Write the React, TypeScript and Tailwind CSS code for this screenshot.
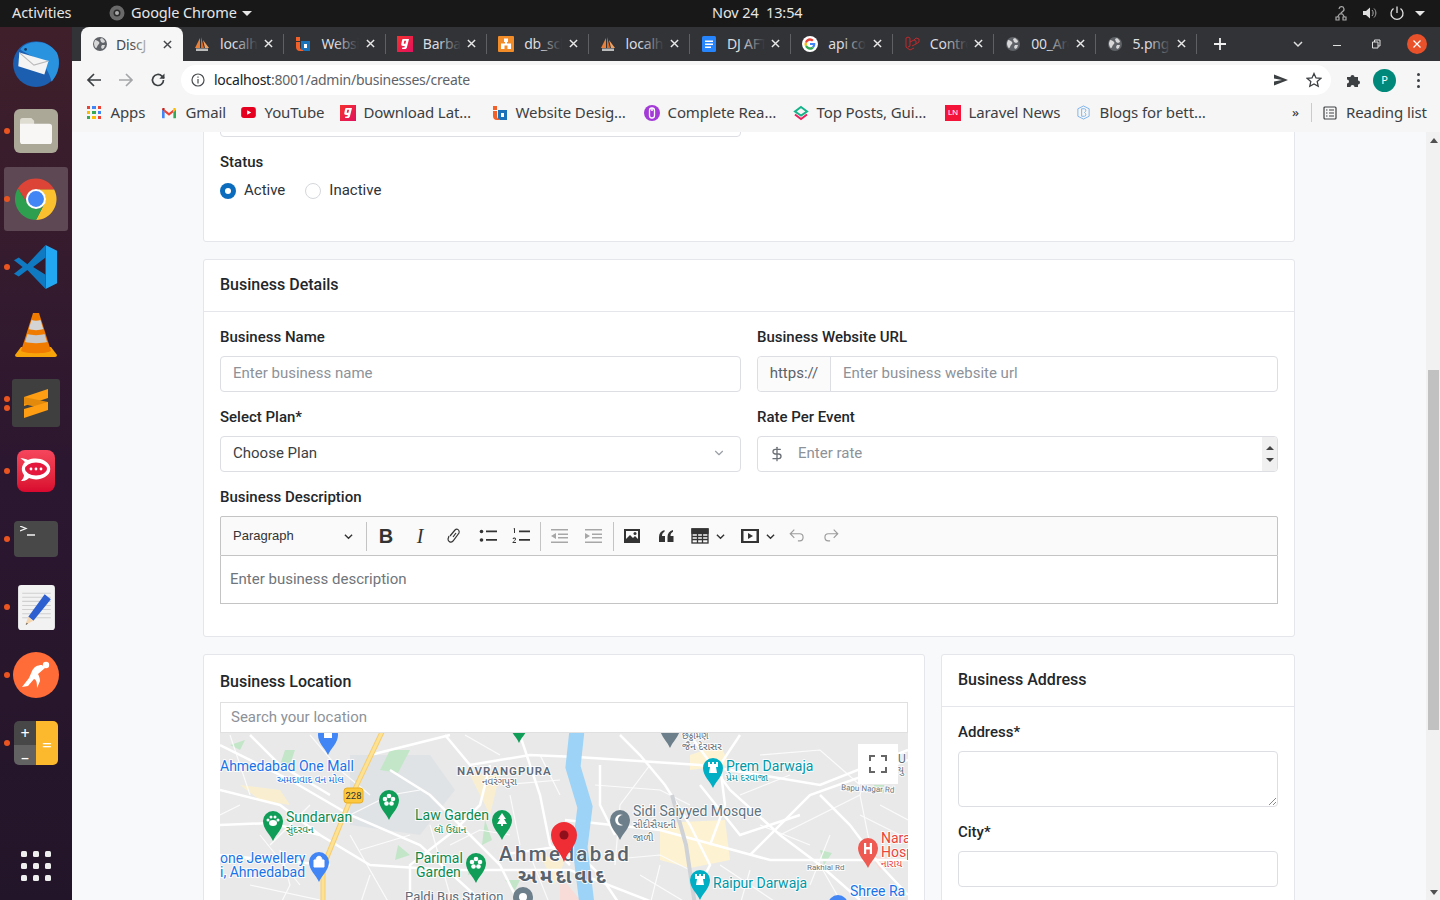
import type { ReactNode } from 'react'
import { ChevronDown, DollarSign } from 'lucide-react'

const ui = 'font-["Noto_Sans","Liberation_Sans",sans-serif]'
const guj = '"Noto Sans Gujarati","Noto Sans","DejaVu Sans",sans-serif'

function Globe({ color = '#5f6368' }: { color?: string }) {
  return (
    <svg viewBox="0 0 16 16" className="h-4 w-4 shrink-0">
      <circle cx="8" cy="8" r="7" fill={color} />
      <path d="M3 4c2 0 3 1 4 2s0 2-1 3-1 3-2 3-2-3-2-5zM10 2c1 1 3 2 3 4l-2 1-2-1-1-3zM10 9l3 0-1 3-2 1-1-2z" fill="#d8d8d8" />
    </svg>
  )
}

function Sails() {
  return (
    <svg viewBox="0 0 16 16" className="h-4 w-4 shrink-0">
      <path d="M1 12 6 2v10z" fill="#e8803a" />
      <path d="M7 12V1l3 11z" fill="#d96a25" />
      <path d="M11 12 9 4l6 8z" fill="#f0a060" />
      <rect x="2" y="12.5" width="12" height="2.5" fill="#bbb" />
    </svg>
  )
}

function SqIcon() {
  return (
    <svg viewBox="0 0 16 16" className="h-4 w-4 shrink-0">
      <path d="M6 5h9v10H6z" fill="#1a73b8" />
      <path d="M9 8h3v4H9z" fill="#fff" />
      <path d="M1 1h4v4H1z" fill="#f2612a" />
      <path d="M1 6h4v5c0 2 1 3 3 3v1H5c-3 0-4-2-4-4z" fill="#f2612a" />
    </svg>
  )
}

function GIcon() {
  return (
    <svg viewBox="0 0 16 16" className="h-4 w-4 shrink-0">
      <defs>
        <linearGradient id="gg" x1="0" y1="0" x2="1" y2="1">
          <stop offset="0" stopColor="#f5312e" />
          <stop offset="1" stopColor="#e0115f" />
        </linearGradient>
      </defs>
      <rect width="16" height="16" fill="url(#gg)" />
      <path d="M6 3h6l-2 8c-.3 1.500-1 2-2.500 2H5l.4-1.500h2l.4-1.500H6c-1.200 0-2-.8-1.700-2l.7-3.500C5.200 3.600 5.500 3 6 3zm1.300 1.800-.6 2.900h1.700l.7-2.900z" fill="#fff" />
    </svg>
  )
}

function DbIcon() {
  return (
    <svg viewBox="0 0 16 16" className="h-4 w-4 shrink-0">
      <rect width="16" height="16" rx="1" fill="#f28c28" />
      <path d="M6 2.500h4v3.500H9v1.500h4V13H9.500V9.500h-3V13H3V7.500h4V6H6z" fill="#fff" />
    </svg>
  )
}

function DocIcon() {
  return (
    <svg viewBox="0 0 16 16" className="h-4 w-4 shrink-0">
      <rect x="1" y="0" width="14" height="16" rx="1.500" fill="#2684fc" />
      <path d="M4 4.500h8v1.500H4zM4 7.500h8V9H4zM4 10.500h6V12H4z" fill="#fff" />
    </svg>
  )
}

function GoogleIcon() {
  return (
    <svg viewBox="0 0 48 48" className="h-4 w-4 shrink-0">
      <circle cx="24" cy="24" r="24" fill="#fff" />
      <path d="M40 24c0-1.200-.1-2.300-.3-3.300H24v6.400h9c-.4 2-1.600 3.800-3.400 5l5.300 4.200C38 33.400 40 29.200 40 24z" fill="#4285f4" />
      <path d="M24 41c4.600 0 8.300-1.500 10.900-4.500l-5.300-4.200c-1.400 1-3.300 1.600-5.600 1.600-4.200 0-7.800-2.900-9.100-6.700l-5.500 4.200C12.100 37.300 17.600 41 24 41z" fill="#34a853" />
      <path d="M14.900 27.200c-.7-2-.7-4.200 0-6.100l-5.500-4.200c-2.400 4.600-2.400 10 0 14.600z" fill="#fbbc05" />
      <path d="M24 14.400c2.400 0 4.600.8 6.200 2.400l4.700-4.700C32.200 9.400 28.400 7 24 7c-6.400 0-11.900 3.700-14.600 9.900l5.500 4.200c1.300-3.800 4.900-6.700 9.100-6.700z" fill="#ea4335" />
    </svg>
  )
}

function LaravelIcon() {
  return (
    <svg viewBox="0 0 16 16" className="h-4 w-4 shrink-0" fill="none" stroke="#c0292d" strokeWidth="1">
      <path d="M2 2v9l4 3 4-2M2 2l2-1 2 1v8l-2 1M6 6l4-2 2 1v3l-4 2M10 4l2-2 3 1v3l-3 2" />
    </svg>
  )
}

const tabs: { title: string; icon: ReactNode }[] = [
  { title: 'localho', icon: <Sails /> },
  { title: 'Websit', icon: <SqIcon /> },
  { title: 'Barbar', icon: <GIcon /> },
  { title: 'db_sch', icon: <DbIcon /> },
  { title: 'localho', icon: <Sails /> },
  { title: 'DJ AFT', icon: <DocIcon /> },
  { title: 'api cod', icon: <GoogleIcon /> },
  { title: 'Contro', icon: <LaravelIcon /> },
  { title: '00_Arc', icon: <Globe /> },
  { title: '5.png', icon: <Globe /> },
]

function TopBar() {
  return (
    <div className={`${ui} relative flex h-[27px] shrink-0 items-center bg-[#181818] pb-px text-[14.500px] tracking-[-0.1px] text-[#e6e6e6]`}>
      <span className="ml-3 w-[97px]">Activities</span>
      <svg viewBox="0 0 16 16" className="h-4 w-4">
        <circle cx="8" cy="8" r="7.500" fill="#6a6a6a" />
        <circle cx="8" cy="8" r="3.500" fill="#2a2a2a" />
        <circle cx="8" cy="8" r="2" fill="#aaa" />
      </svg>
      <span className="ml-[6px]">Google Chrome</span>
      <span className="ml-[5px] h-0 w-0 border-x-[5px] border-t-[5px] border-x-transparent border-t-[#e6e6e6]" />
      <span className="absolute left-[712px]">Nov 24&nbsp; 13:54</span>
      <div className="ml-auto mr-[15px] flex items-center">
        <svg viewBox="0 0 16 16" className="h-4 w-4" fill="none" stroke="#aaa" strokeWidth="1.200">
          <path d="M6 4a2.500 2.500 0 1 1 3.500 2.500L8 8v1M3 15v-3h3v3zM10 15v-3h3v3zM4.500 12l2-3h3l2 3" />
        </svg>
        <svg viewBox="0 0 16 16" className="ml-3 h-4 w-4">
          <path d="M2 6h3l4-3.500v11L5 10H2z" fill="#e0e0e0" />
          <path d="M11 5c1.500 1.500 1.500 4.500 0 6M13 3.500c2.500 2.500 2.500 6.500 0 9" fill="none" stroke="#aaa" />
        </svg>
        <svg viewBox="0 0 16 16" className="ml-3 h-4 w-4" fill="none" stroke="#e0e0e0" strokeWidth="1.300">
          <path d="M8 1.500V8M4.500 3.500a6 6 0 1 0 7 0" />
        </svg>
        <span className="ml-[10px] h-0 w-0 border-x-[5px] border-t-[5px] border-x-transparent border-t-[#e6e6e6]" />
      </div>
    </div>
  )
}

function CloseX({ color }: { color: string }) {
  return (
    <svg viewBox="0 0 10 10" className="ml-auto h-[9px] w-[9px] shrink-0" stroke={color} strokeWidth="1.600">
      <path d="M1 1l8 8M9 1l-8 8" />
    </svg>
  )
}

function TabStrip() {
  return (
    <div className={`${ui} flex h-[34px] shrink-0 bg-[#323336] pb-px pl-[81px] text-[14px] tracking-[-0.2px]`}>
      <div className="relative flex h-[34px] w-[102px] shrink-0 items-center rounded-t-[8px] bg-[#f6f6f6] pl-[11px] pr-[11px] text-[#45474a]">
        <Globe />
        <span className="ml-2 w-[39px] overflow-hidden whitespace-nowrap">DiscJ</span>
        <span className="absolute left-[50px] top-0 h-full w-[24px] bg-gradient-to-r from-transparent to-[#f6f6f6]" />
        <CloseX color="#45474a" />
      </div>
      {tabs.map((t, i) => (
        <div key={i} className="relative flex h-[33px] w-[101.400px] shrink-0 items-center pl-[11px] pr-[11px] text-[#dcdde0]">
          {t.icon}
          <span className="ml-[10px] w-[38px] overflow-hidden whitespace-nowrap">{t.title}</span>
          <span className="absolute left-[51px] top-0 h-full w-[24px] bg-gradient-to-r from-transparent to-[#323336]" />
          <CloseX color="#e8e8e8" />
          <span className="absolute right-0 top-[7px] h-[20px] w-px bg-[#5f6063]" />
        </div>
      ))}
      <div className="flex h-[33px] flex-1 items-center">
        <svg viewBox="0 0 14 14" className="ml-[16px] h-[14px] w-[14px]" stroke="#f0f0f0" strokeWidth="1.800">
          <path d="M7 1v12M1 7h12" />
        </svg>
        <svg viewBox="0 0 12 12" className="ml-[65px] h-3 w-3" fill="none" stroke="#e0e0e0" strokeWidth="1.500">
          <path d="M2 4l4 4 4-4" />
        </svg>
        <span className="ml-[29px] mt-[3px] h-px w-2 bg-[#e0e0e0]" />
        <svg viewBox="0 0 10 10" className="ml-[30px] h-[10px] w-[10px]" fill="none" stroke="#e0e0e0">
          <path d="M1.500 3h5.500v6H1.500zM3.500 3V1h5.500v6H7" />
        </svg>
        <span className="ml-[26px] flex h-5 w-5 items-center justify-center rounded-full bg-[#e9512b]">
          <svg viewBox="0 0 10 10" className="h-[10px] w-[10px]" stroke="#fff" strokeWidth="1.200">
            <path d="M1.500 1.500l7 7M8.500 1.500l-7 7" />
          </svg>
        </span>
      </div>
    </div>
  )
}

function Toolbar() {
  return (
    <div className="flex h-[35px] shrink-0 items-center bg-[#f6f6f6] pt-[3px]">
      <svg viewBox="0 0 16 16" className="ml-[86px] h-4 w-4" fill="none" stroke="#3c4043" strokeWidth="1.700">
        <path d="M15 8H2M8 2 2 8l6 6" />
      </svg>
      <svg viewBox="0 0 16 16" className="ml-4 h-4 w-4" fill="none" stroke="#a4a6a9" strokeWidth="1.700">
        <path d="M1 8h13M8 2l6 6-6 6" />
      </svg>
      <svg viewBox="0 0 16 16" className="ml-4 h-4 w-4" fill="none" stroke="#3c4043" strokeWidth="1.700">
        <path d="M13.500 8a5.500 5.500 0 1 1-1.600-3.900L14 6.200" />
        <path d="M14.500 1.500v5.200H9.300" fill="#3c4043" stroke="none" />
      </svg>
      <div className='ml-[15px] flex h-[30px] w-[1150px] items-center rounded-full bg-white pb-px pl-[10px] font-["Noto_Sans",sans-serif] text-[14px] tracking-[-0.25px]'>
        <svg viewBox="0 0 14 14" className="h-[14px] w-[14px]" fill="none" stroke="#4a4d50" strokeWidth="1.200">
          <circle cx="7" cy="7" r="6" />
          <path d="M7 6v4.500M7 3.500v1.300" />
        </svg>
        <span className="ml-[9px] text-[#202124]">localhost</span>
        <span className="text-[#5f6368]">:8001/admin/businesses/create</span>
        <svg viewBox="0 0 16 16" className="ml-auto h-4 w-4">
          <path d="M1 2.500 15 8 1 13.500V9.500L9 8 1 6.500z" fill="#3c4043" />
        </svg>
        <svg viewBox="0 0 16 16" className="ml-[17px] mr-[9px] h-4 w-4" fill="none" stroke="#3c4043" strokeWidth="1.300">
          <path d="M8 1.500l2 4.400 4.800.5-3.600 3.200 1 4.700L8 11.900l-4.200 2.400 1-4.700L1.200 6.400 6 5.900z" />
        </svg>
      </div>
      <svg viewBox="0 0 16 16" className="ml-[15px] h-4 w-4" fill="#3c4043">
        <path d="M1 5h3.500a2 2 0 1 1 4 0H12v3.500a2 2 0 1 1 0 4V15H8.500a2 2 0 1 0-4 0H1v-3.500a2 2 0 1 0 0-4z" />
      </svg>
      <span className="ml-[11px] flex h-[23px] w-[23px] items-center justify-center rounded-full bg-[#00897b] font-['Noto_Sans',sans-serif] text-[11px] text-white">P</span>
      <span className="ml-[21px] flex flex-col gap-[3px]">
        <span className="h-[3px] w-[3px] rounded-full bg-[#3c4043]" />
        <span className="h-[3px] w-[3px] rounded-full bg-[#3c4043]" />
        <span className="h-[3px] w-[3px] rounded-full bg-[#3c4043]" />
      </span>
    </div>
  )
}

function AppsIcon() {
  const cols = ['#ea4335', '#4285f4', '#ea4335', '#fbbc05', '#34a853', '#4285f4', '#34a853', '#fbbc05', '#ea4335']
  return (
    <span className="grid h-[14px] w-[14px] grid-cols-3 gap-[2px]">
      {cols.map((c, i) => (
        <span key={i} className="h-[3.300px] w-[3.300px]" style={{ background: c }} />
      ))}
    </span>
  )
}

const bookmarks: { label: string; w: string; icon: ReactNode }[] = [
  { label: 'Apps', w: 'w-[75px]', icon: <AppsIcon /> },
  {
    label: 'Gmail',
    w: 'w-[79px]',
    icon: (
      <svg viewBox="0 0 16 12" className="h-[12px] w-[14px]">
        <path d="M0 2v9a1 1 0 0 0 1 1h2V5z" fill="#4285f4" />
        <path d="M16 2v9a1 1 0 0 1-1 1h-2V5z" fill="#34a853" />
        <path d="M3 5v-3L8 6l5-4v3L8 9z" fill="#ea4335" />
        <path d="M0 2c0-2 2-2 3-1.500V5z" fill="#c5221f" />
        <path d="M16 2c0-2-2-2-3-1.500V5z" fill="#fbbc05" />
      </svg>
    ),
  },
  {
    label: 'YouTube',
    w: 'w-[99px]',
    icon: (
      <svg viewBox="0 0 16 12" className="h-[11px] w-[15px]">
        <rect width="16" height="12" rx="3" fill="#e6001f" />
        <path d="M6.500 3.500 11 6l-4.500 2.500z" fill="#fff" />
      </svg>
    ),
  },
  { label: 'Download Lat…', w: 'w-[152px]', icon: <GIcon /> },
  { label: 'Website Desig…', w: 'w-[152px]', icon: <SqIcon /> },
  {
    label: 'Complete Rea…',
    w: 'w-[149px]',
    icon: (
      <svg viewBox="0 0 16 16" className="h-4 w-4">
        <circle cx="8" cy="8" r="8" fill="#a43bd8" />
        <rect x="5.500" y="3" width="5" height="10" rx="2.500" fill="none" stroke="#fff" strokeWidth="1.300" />
        <circle cx="8" cy="5" r="1" fill="#fff" />
      </svg>
    ),
  },
  {
    label: 'Top Posts, Gui…',
    w: 'w-[152px]',
    icon: (
      <svg viewBox="0 0 16 16" className="h-4 w-4" fill="none" strokeWidth="2">
        <path d="M8 2 14 6.500 8 10.500 2 6.500z" stroke="#14b38a" />
        <path d="M2 9.500 8 14l6-4.500" stroke="#e8225e" />
      </svg>
    ),
  },
  {
    label: 'Laravel News',
    w: 'w-[131px]',
    icon: (
      <span className='flex h-4 w-4 items-center justify-center bg-[#f4143a] font-["Liberation_Sans",sans-serif] text-[8px] text-white'>LN</span>
    ),
  },
  {
    label: 'Blogs for bett…',
    w: 'w-[216px]',
    icon: (
      <svg viewBox="0 0 16 16" className="h-[15px] w-[15px]" fill="none" stroke="#7cb2e8">
        <path d="M8 1 14 4v8l-6 3-6-3V4z" />
        <path d="M6 4v8M6 4h3c2 0 2 3 0 4 2 1 2 4 0 4H6" />
      </svg>
    ),
  },
]

function BookmarksBar() {
  return (
    <div className={`${ui} flex h-[36px] shrink-0 items-center bg-[#f6f6f6] pb-[3px] pl-[87px] text-[15px] tracking-[-0.1px] text-[#3c4043]`}>
      {bookmarks.map((b) => (
        <div key={b.label} className={`${b.w} flex items-center whitespace-nowrap`}>
          <span className="flex w-[23.500px] shrink-0">{b.icon}</span>
          <span>{b.label}</span>
        </div>
      ))}
      <span className="w-[10px] text-[13px] font-medium">»</span>
      <span className="ml-[9px] h-[19px] w-px bg-[#c9cbcd]" />
      <svg viewBox="0 0 14 14" className="ml-[11px] h-[14px] w-[14px]" fill="none" stroke="#3c4043" strokeWidth="1.200">
        <rect x="1" y="1" width="12" height="12" rx="1" />
        <path d="M3 4h1.500M6 4h5M3 7h1.500M6 7h5M3 10h1.500M6 10h5" />
      </svg>
      <span className="ml-[9px]">Reading list</span>
    </div>
  )
}

function ChromeLogo() {
  return (
    <svg viewBox="0 0 48 48" className="h-[46px] w-[46px]">
      <path d="M24 14H43A22 22 0 0 0 5 13L15.300 29A10 10 0 0 1 24 14Z" fill="#db4437" />
      <path d="M24 14H43A22 22 0 0 1 24 46L32.700 29A10 10 0 0 0 24 14Z" fill="#fbc02d" />
      <path d="M5 13A22 22 0 0 0 24 46L32.700 29A10 10 0 0 1 15.300 29Z" fill="#2e9e4f" />
      <circle cx="24" cy="24" r="10.500" fill="#fff" />
      <circle cx="24" cy="24" r="8.300" fill="#4285f4" />
    </svg>
  )
}

const dockIcons: { icon: ReactNode; dots: number; active?: boolean }[] = [
  {
    dots: 0,
    icon: (
      <svg viewBox="0 0 48 48" className="h-[50px] w-[50px]">
        <circle cx="24" cy="25" r="22" fill="#1c5fb0" />
        <path d="M9 11C15 2 34 0 44 14c4 8 2 20-5 28-2-8-6-16-14-22C18 16 13 14 9 11z" fill="#2a93e0" />
        <path d="M8 14l28 8-4 13L7 27z" fill="#f4f4f4" />
        <path d="M8 14l14 12 14-4" fill="none" stroke="#b9b9b9" />
        <circle cx="14" cy="11" r="1.300" fill="#12355e" />
      </svg>
    ),
  },
  {
    dots: 1,
    icon: (
      <div className="flex h-[44px] w-[44px] items-center justify-center rounded-[6px] bg-[#aba898]">
        <svg viewBox="0 0 34 28" className="w-[32px]">
          <path d="M0 3a3 3 0 0 1 3-3h9l3 3v4H0z" fill="#dfdcd2" />
          <path d="M0 6h31a3 3 0 0 1 3 3v16a3 3 0 0 1-3 3H3a3 3 0 0 1-3-3z" fill="#f8f7f5" />
        </svg>
      </div>
    ),
  },
  { dots: 1, active: true, icon: <ChromeLogo /> },
  {
    dots: 1,
    icon: (
      <svg viewBox="0 0 48 48" className="h-[46px] w-[46px]">
        <path d="M34 1 46 7v34l-12 6z" fill="#22a7f2" />
        <path d="M34 1 15 21 6 14 1 17l9 7-9 7 5 3 9-7 19 20V32L21 24 34 14z" fill="#0f79c2" />
      </svg>
    ),
  },
  {
    dots: 0,
    icon: (
      <svg viewBox="0 0 48 48" className="h-[48px] w-[48px]">
        <path d="M9 36h30l6 8a2 2 0 0 1-2 2H5a2 2 0 0 1-2-2z" fill="#f7a30a" />
        <path d="M21 2h6l12 38c-5 3-25 3-30 0z" fill="#ef7c00" />
        <path d="M19.500 9c2.500 1 6.500 1 9 0l2.700 9c-4 1.500-10.400 1.500-14.400 0z" fill="#d4d4d4" />
        <path d="M15.500 23c4 1.500 13 1.500 17 0l2.500 8c-5 1.500-17 1.500-22 0z" fill="#c9c9c9" />
      </svg>
    ),
  },
  {
    dots: 2,
    icon: (
      <div className="flex h-[48px] w-[48px] items-center justify-center rounded-[3px] bg-[#3f3f3f]">
        <svg viewBox="0 0 24 32" className="w-[24px]">
          <path d="M0 10 24 2v9L0 19z" fill="#ff9d13" />
          <path d="M0 17 24 23v-8L0 10z" fill="#e38a0c" />
          <path d="M0 22 24 15v8L0 31z" fill="#ff9d13" />
        </svg>
      </div>
    ),
  },
  {
    dots: 1,
    icon: (
      <div className="flex h-[42px] w-[38px] items-center justify-center rounded-[8px] bg-gradient-to-b from-[#f5455c] to-[#d9072e]">
        <svg viewBox="0 0 32 26" className="w-[32px]">
          <path d="M5 4C2 1 0 0 0 0c3 0 6 1 8 2 5-2 12-2 17 1 7 4 7 12 0 16-5 3-11 3-16 1-3 3-6 3-8 3 2-2 3-4 3-6C1 13 1 8 5 4z" fill="#fff" />
          <ellipse cx="16" cy="11" rx="11" ry="6.500" fill="#e4173c" />
          <circle cx="11" cy="11" r="1.400" fill="#fff" />
          <circle cx="16" cy="11" r="1.400" fill="#fff" />
          <circle cx="21" cy="11" r="1.400" fill="#fff" />
        </svg>
      </div>
    ),
  },
  {
    dots: 1,
    icon: (
      <div className="h-[36px] w-[44px] rounded-[4px] bg-[#484848] pl-[6px] pt-[5px]">
        <svg viewBox="0 0 16 10" className="w-[16px]" fill="none" stroke="#f4f4f4" strokeWidth="1.300">
          <path d="M0 0l6 2.500L0 5M7 9h8" />
        </svg>
      </div>
    ),
  },
  {
    dots: 1,
    icon: (
      <svg viewBox="0 0 36 44" className="h-[45px] w-[37px]">
        <rect width="36" height="44" rx="3" fill="#f2f2f2" />
        <path d="M4 8h28M4 12h28M4 16h28M4 20h28M4 24h28M4 28h28M4 32h28" stroke="#d0d0d0" />
        <path d="M26 9l6 5-17 21-5-4z" fill="#2d5fd1" />
        <path d="M10 31l5 4-8 4z" fill="#f4d7b0" />
        <path d="M8.500 37l-1 2 2-1z" fill="#444" />
      </svg>
    ),
  },
  {
    dots: 1,
    icon: (
      <svg viewBox="0 0 46 46" className="h-[46px] w-[46px]">
        <circle cx="23" cy="23" r="23" fill="#ff6c37" />
        <circle cx="33" cy="13" r="3.200" fill="#fff" />
        <path d="M29 13c-5 0-8 2-10 6l-3 7-7 9 6-1 6-7c3 1 3 5 3 9l3-7c0-3-1-5-2-7l7-6c-1-1-2-2-3-3z" fill="#fff" />
      </svg>
    ),
  },
  {
    dots: 1,
    icon: (
      <div className="grid h-[44px] w-[44px] grid-cols-2 overflow-hidden rounded-[5px]">
        <div className="flex flex-col">
          <div className="flex flex-1 items-center justify-center bg-[#474747] text-[16px] text-white">+</div>
          <div className="flex flex-1 items-center justify-center bg-[#626262] text-[16px] text-white">–</div>
        </div>
        <div className="flex items-center justify-center bg-[#fdb92d] text-[17px] text-white">=</div>
      </div>
    ),
  },
]

function Dock() {
  return (
    <div className="flex w-[72px] shrink-0 flex-col bg-gradient-to-b from-[#3f1f2a] via-[#2c1730] to-[#231529] pt-[2px]">
      {dockIcons.map((d, i) => (
        <div key={i} className="relative flex h-[68px] items-center justify-center">
          {d.active && <span className="absolute inset-x-1 inset-y-[2px] rounded-[3px] bg-[#5e4854]" />}
          <span className="relative">{d.icon}</span>
          {d.dots === 1 && <span className="absolute left-[4px] h-[6px] w-[6px] rounded-full bg-[#e95420]" />}
          {d.dots === 2 && (
            <span className="absolute left-[4px] flex flex-col gap-[3px]">
              <span className="h-[6px] w-[6px] rounded-full bg-[#e95420]" />
              <span className="h-[6px] w-[6px] rounded-full bg-[#e95420]" />
            </span>
          )}
        </div>
      ))}
      <div className="mt-auto mb-[19px] grid w-[30px] grid-cols-3 gap-[6px] self-center">
        {Array.from({ length: 9 }).map((_, i) => (
          <span key={i} className="h-[6px] w-[6px] rounded-[1.500px] bg-[#eeeeee]" />
        ))}
      </div>
    </div>
  )
}

function Label({ children }: { children: ReactNode }) {
  return <label className="mb-[9px] block h-[20px] text-[15px] font-medium leading-[20px] text-[#23272b]">{children}</label>
}

const inputBox = 'h-[36px] w-full rounded-[4px] border border-[#dcdee3] bg-white pb-[2px]'

function Placeholder({ children, className = '' }: { children: ReactNode; className?: string }) {
  return <span className={`text-[15px] text-[#8d9299] ${className}`}>{children}</span>
}

function ToolBtn({ children, w = 'w-[34px]' }: { children: ReactNode; w?: string }) {
  return <span className={`flex h-full shrink-0 items-center justify-center ${w}`}>{children}</span>
}

function Chev() {
  return (
    <svg viewBox="0 0 10 10" className="h-[9px] w-[9px] shrink-0" fill="none" stroke="#333" strokeWidth="1.500">
      <path d="M1 3l4 4 4-4" />
    </svg>
  )
}

function Sep({ className = '' }: { className?: string }) {
  return <span className={`h-[29px] w-px shrink-0 bg-[#c4c4c4] ${className}`} />
}

function EditorBar() {
  return (
    <div className="flex h-[40px] items-center rounded-t-[2px] border border-[#c4c4c4] bg-[#fafafa] pl-[12px]">
      <span className='w-[111px] shrink-0 font-["Liberation_Sans",sans-serif] text-[13px] text-[#333]'>Paragraph</span>
      <Chev />
      <Sep className="ml-[13px] mr-[2px]" />
      <ToolBtn>
        <span className='font-["Liberation_Sans",sans-serif] text-[20px] font-bold text-[#333]'>B</span>
      </ToolBtn>
      <ToolBtn>
        <span className='font-["Liberation_Serif",serif] text-[20px] italic text-[#333]'>I</span>
      </ToolBtn>
      <ToolBtn>
        <svg viewBox="0 0 20 20" className="h-5 w-5" fill="none" stroke="#333" strokeWidth="1.200">
          <path d="M6 10l5-6c2-2 5 0 4 3l-6 8c-2 2-5 1-5-2l1-3M9 11l3-4" />
        </svg>
      </ToolBtn>
      <ToolBtn w="w-[33px]">
        <svg viewBox="0 0 20 20" className="h-5 w-5" fill="#333">
          <circle cx="3.500" cy="5.500" r="1.800" />
          <circle cx="3.500" cy="14" r="1.800" />
          <path d="M8 4.500h11v1.700H8zM8 13h11v1.700H8z" />
        </svg>
      </ToolBtn>
      <ToolBtn w="w-[33px]">
        <svg viewBox="0 0 20 20" className="h-5 w-5" fill="#333">
          <path d="M8 4.500h11v1.700H8zM8 13h11v1.700H8zM2.500 2.500 4 2v5H3V3.500zM1.500 12.500c1-1.500 3.500-1 3.500.5 0 1-1.500 2-2.500 3H5v1H1.500v-.8c1-1 2.500-2 2.500-3 0-.8-1.200-.8-1.700 0z" />
        </svg>
      </ToolBtn>
      <Sep className="ml-[3px] mr-[1px]" />
      <ToolBtn>
        <svg viewBox="0 0 20 20" className="h-5 w-5" fill="#a7a7a7">
          <path d="M2 3h17v1.500H2zM9 7.500h10V9H9zM9 11h10v1.500H9zM2 15.500h17V17H2zM7 7v6L2 10z" />
        </svg>
      </ToolBtn>
      <ToolBtn>
        <svg viewBox="0 0 20 20" className="h-5 w-5" fill="#a7a7a7">
          <path d="M2 3h17v1.500H2zM9 7.500h10V9H9zM9 11h10v1.500H9zM2 15.500h17V17H2zM2 7v6l5-3z" />
        </svg>
      </ToolBtn>
      <Sep className="ml-[3px] mr-[1px]" />
      <ToolBtn>
        <svg viewBox="0 0 20 20" className="h-5 w-5" fill="#333">
          <path d="M2 3h16v14H2zm2 2v8l4-4 3 3 2-2 3 3V5z" fillRule="evenodd" />
          <circle cx="13" cy="7.500" r="1.500" />
        </svg>
      </ToolBtn>
      <ToolBtn>
        <svg viewBox="0 0 20 20" className="h-5 w-5" fill="#333">
          <path d="M8.500 4C5 5 3 7.500 3 11v5h6v-6H6c0-2 1-3.500 2.500-4.200zM17 4c-3.500 1-5.500 3.500-5.500 7v5h6v-6h-3c0-2 1-3.500 2.500-4.200z" />
        </svg>
      </ToolBtn>
      <span className="ml-[7px] flex shrink-0 items-center gap-[6px]">
        <svg viewBox="0 0 20 20" className="h-5 w-5" fill="none" stroke="#333" strokeWidth="1.300">
          <rect x="2" y="3" width="16" height="14" />
          <path d="M2 7.500h16M2 10.500h16M2 13.500h16M7.500 7.500V17M12.500 7.500V17" />
          <path d="M2 3h16v4H2z" fill="#333" />
        </svg>
        <Chev />
      </span>
      <span className="ml-[15px] flex shrink-0 items-center gap-[6px]">
        <svg viewBox="0 0 20 20" className="h-5 w-5">
          <path d="M1 3h18v14H1zm2.500 2v10h13V5z" fill="#333" fillRule="evenodd" />
          <path d="M8 7l5 3-5 3z" fill="#333" />
        </svg>
        <Chev />
      </span>
      <svg viewBox="0 0 20 20" className="ml-[13px] h-[18px] w-[18px] shrink-0" fill="none" stroke="#9c9c9c" strokeWidth="1.300">
        <path d="M7 3 2.500 7.500 7 12M3 7.500h10c5 0 5 8 0 8h-2" />
      </svg>
      <svg viewBox="0 0 20 20" className="ml-[16px] h-[18px] w-[18px] shrink-0" fill="none" stroke="#9c9c9c" strokeWidth="1.300">
        <path d="M13 3l4.500 4.500L13 12M17 7.500H7c-5 0-5 8 0 8h2" />
      </svg>
    </div>
  )
}

function pin(x: number, y: number, color: string, key: string, glyph?: ReactNode) {
  // x,y is the centre of the round head
  return (
    <g key={key} transform={`translate(${x} ${y})`}>
      <path d="M0 20C-3 13-10 8-10 0a10 10 0 0 1 20 0C10 8 3 13 0 20z" fill={color} />
      {glyph}
    </g>
  )
}

const flower = (
  <g fill="#fff">
    <circle cx="0" cy="-4" r="2.300" />
    <circle cx="-4" cy="-1" r="2.300" />
    <circle cx="4" cy="-1" r="2.300" />
    <circle cx="-2.500" cy="3.500" r="2.300" />
    <circle cx="2.500" cy="3.500" r="2.300" />
  </g>
)
const bag = <path d="M-5-2h10v7H-5zM-3-2c0-5 6-5 6 0" fill="#fff" stroke="#fff" />
const tower = <path d="M-5-6h2v2h2v-2h2v2h2v-2h2v5H3l1 6H-4l1-6h-2z" fill="#fff" />

type Lbl = { x: number; y: number; t: string; c: string; s: number; w?: number; g?: boolean; ls?: number; rot?: number }

const labels: Lbl[] = [
  { x: 0, y: 36, t: 'Ahmedabad One Mall', c: '#1a73e8', s: 14 },
  { x: 57, y: 48, t: 'અમદાવાદ વન મોલ', c: '#1a73e8', s: 10, g: true },
  { x: 237, y: 40, t: 'NAVRANGPURA', c: '#5f6b78', s: 11.500, w: 600, ls: 1 },
  { x: 262, y: 50, t: 'નવરંગપુરા', c: '#5f6b78', s: 10, g: true },
  { x: 66, y: 87, t: 'Sundarvan', c: '#0d8a4e', s: 14 },
  { x: 66, y: 98, t: 'સુંદરવન', c: '#0d8a4e', s: 10, g: true },
  { x: 195, y: 85, t: 'Law Garden', c: '#0d8a4e', s: 14 },
  { x: 214, y: 98, t: 'લૉ ઉદ્યાન', c: '#0d8a4e', s: 10, g: true },
  { x: 0, y: 128, t: 'one Jewellery', c: '#1a73e8', s: 14 },
  { x: 0, y: 142, t: 'i, Ahmedabad', c: '#1a73e8', s: 14 },
  { x: 195, y: 128, t: 'Parimal', c: '#0d8a4e', s: 14 },
  { x: 196, y: 142, t: 'Garden', c: '#0d8a4e', s: 14 },
  { x: 185, y: 166, t: 'Paldi Bus Station', c: '#5f6b78', s: 13 },
  { x: 462, y: 4, t: 'છઠ્ઠામણ', c: '#5f6b78', s: 9, g: true },
  { x: 462, y: 15, t: 'જૈન દેરાસર', c: '#5f6b78', s: 10, g: true },
  { x: 506, y: 36, t: 'Prem Darwaja', c: '#0097a7', s: 14 },
  { x: 506, y: 46, t: 'પ્રેમ દરવાજા', c: '#0097a7', s: 10, g: true },
  { x: 413, y: 81, t: 'Sidi Saiyyed Mosque', c: '#5f7380', s: 14 },
  { x: 413, y: 93, t: 'સીદીસૈયદની', c: '#5f7380', s: 10, g: true },
  { x: 413, y: 106, t: 'જાળી', c: '#5f7380', s: 10, g: true },
  { x: 493, y: 153, t: 'Raipur Darwaja', c: '#0097a7', s: 14 },
  { x: 621, y: 55, t: 'Bapu Nagar Rd', c: '#6d7680', s: 8, rot: 3 },
  { x: 587, y: 135, t: 'Rakhial Rd', c: '#6d7680', s: 8 },
  { x: 661, y: 108, t: 'Nara', c: '#e8453c', s: 14 },
  { x: 661, y: 122, t: 'Hosp', c: '#e8453c', s: 14 },
  { x: 661, y: 132, t: 'નારાય', c: '#e8453c', s: 10, g: true },
  { x: 630, y: 161, t: 'Shree Ra', c: '#1a73e8', s: 14 },
  { x: 678, y: 28, t: 'U', c: '#5f6b78', s: 12 },
  { x: 678, y: 38, t: 'યુ', c: '#5f6b78', s: 10, g: true },
]

const roads = [
  'M0 10 70 45 130 80 200 110 260 165',
  'M0 55 60 70 100 100 150 130 230 135 350 135 440 170',
  'M30 0 60 30 110 60',
  'M0 90 50 88 100 100',
  'M170 35 210 60 250 100 280 130 300 170',
  'M225 0 250 30 310 20 357 22 480 30 600 50 688 15',
  'M270 30 260 70 235 95 190 130 190 170',
  'M300 0 320 60 330 110 350 130',
  'M400 0 420 20 445 50 470 90 490 130 480 150',
  'M520 0 500 30 505 70 490 110',
  'M470 0 510 55 560 100 600 130 640 165',
  'M688 25 590 60 530 120',
  'M600 60 630 90 660 130 688 160',
  'M345 85 440 95 550 125 688 125',
  'M280 120 350 110 380 140 400 170',
  'M150 20 230 0',
  'M0 120 50 125 110 130',
  'M480 50 520 100 580 80',
  'M380 30 380 70 395 100',
]
const thinRoads = [
  'M90 0 120 35 150 60',
  'M10 0 20 30 30 60',
  'M40 100 80 150',
  'M130 100 170 170',
  'M210 90 230 160',
  'M290 60 300 110',
  'M320 20 340 60',
  'M430 30 400 70 395 130',
  'M540 20 600 15 640 50',
  'M560 100 640 60',
  'M600 130 620 165',
  'M640 80 680 100',
  'M500 130 560 170',
  'M420 140 470 170',
  'M30 150 100 165',
  'M150 140 140 170',
  'M90 70 50 110',
  'M245 0 280 20',
  'M310 120 330 170',
  'M650 20 640 60 650 110',
  'M120 85 170 60 200 55',
  'M140 115 190 100',
  'M20 70 0 80',
  'M60 115 70 150 60 170',
  'M230 110 260 95 290 100',
  'M280 50 340 45',
  'M375 50 440 55 470 70',
  'M385 125 440 120 470 135',
  'M520 60 570 40',
  'M540 90 590 110',
  'M610 100 590 150',
  'M660 70 688 85',
  'M440 130 430 170',
  'M530 135 520 170',
]

function MapView() {
  return (
    <div className="relative h-[170px] w-full overflow-hidden bg-[#e9e9e9]">
      <svg viewBox="0 -2 688 170" className="h-[170px] w-[688px]">
        <path d="M130 20 210 20 235 55 200 100 130 90z" fill="#e0e3e6" />
        <path d="M170 15 190 15 178 38 160 35z" fill="#c3e6c9" />
        <path d="M440 88 505 85 510 125 470 133 440 125z M470 20 500 10 510 30 470 35z" fill="#fdf2d2" />
        <path d="M20 50 60 55 70 70 40 65z M250 40 280 38 270 80 260 60z M320 120 345 125 335 150z" fill="#f9efd0" />
        <path d="M650 120 680 125 660 135z" fill="#f8dcd8" />
        <path d="M340 140 360 165 340 170z" fill="#f8dcd8" />
        <path d="M65 15 75 15 70 30 60 30z M10 10 25 5 20 15z M178 110 190 120 175 125z M250 125 262 135 248 140z M600 115 612 118 604 130z M654 50 664 50 664 58 654 58z M285 145 300 145 295 155z M265 85 272 105 262 110z" fill="#c3e6c9" />
        {thinRoads.map((d) => (
          <path key={d} d={d} fill="none" stroke="#fbfbfb" strokeWidth="1.200" />
        ))}
        {roads.map((d) => (
          <path key={d} d={d} fill="none" stroke="#ffffff" strokeWidth="2.500" />
        ))}
        <path d="M452 60 466 110 475 170" fill="none" stroke="#cfd2d6" strokeWidth="4" />
        <path d="M357 -5 353 32 365 72 360 112 367 170" fill="none" stroke="#9cd3f7" strokeWidth="15" />
        <path d="M163 -5 133 58 103 132 103 170" fill="none" stroke="#f6cd70" strokeWidth="5" />
        <path d="M163 -5 133 58 103 132 103 170" fill="none" stroke="#fde293" strokeWidth="3" />
        <rect x="124" y="53" width="19" height="15" rx="3" fill="#fbc83f" stroke="#e9ae23" />
        <text x="133.500" y="64" textAnchor="middle" fontSize="9.500" fontFamily="Roboto, sans-serif" fill="#333">228</text>
        {pin(108, 0, '#4285f4', 'a', <path d="M-4-2h8v5h-8z" fill="#fff" />)}
        {pin(299, -12, '#0f9d58', 'b')}
        {pin(450, -7, '#6d7f8b', 'c')}
        {pin(169, 65, '#0f9d58', 'd', flower)}
        {pin(53, 86, '#0f9d58', 'e', <g fill="#fff"><ellipse cx="0" cy="2" rx="4" ry="3" /><circle cx="-5" cy="-1" r="1.500" /><circle cx="-2" cy="-4" r="1.500" /><circle cx="2" cy="-4" r="1.500" /><circle cx="5" cy="-1" r="1.500" /></g>)}
        {pin(282, 85, '#0f9d58', 'f', <path d="M0-7 4-1H2L5 4H1V6H-1V4H-5L-2-1H-4z" fill="#fff" />)}
        {pin(99, 127, '#4285f4', 'g', bag)}
        {pin(256, 128, '#0f9d58', 'h', flower)}
        {pin(303, 162, '#6d7f8b', 'i', <circle r="4" fill="#fff" />)}
        {pin(493, 33, '#00afc4', 'j', tower)}
        {pin(400, 85, '#6d7f8b', 'k', <path d="M3-5A5.500 5.500 0 1 0 3 5 4.500 4.500 0 1 1 3-5z" fill="#fff" />)}
        {pin(480, 145, '#00afc4', 'l', tower)}
        {pin(648, 113, '#ee5a52', 'm', <path d="M-4-5h2.200v4h3.600v-4H4V6H1.800V1.500h-3.600V6H-4z" fill="#fff" />)}
        {pin(618, 170, '#4285f4', 'n')}
        {labels.map((l) => (
          <text
            key={l.t + l.x}
            x={l.x}
            y={l.y}
            fontSize={l.s}
            fontWeight={l.w ?? 400}
            letterSpacing={l.ls}
            fontFamily={l.g ? guj : 'Roboto, sans-serif'}
            fill={l.c}
            stroke="#ffffff"
            strokeWidth="2"
            strokeOpacity="0.85"
            paintOrder="stroke"
            transform={l.rot ? `rotate(${l.rot} ${l.x} ${l.y})` : undefined}
          >
            {l.t}
          </text>
        ))}
        <text x="279" y="126" fontSize="20.500" fontWeight="500" letterSpacing="2.400" fontFamily="Roboto, sans-serif" fill="#59636e" stroke="#fff" strokeWidth="2" strokeOpacity="0.85" paintOrder="stroke">Ahmedabad</text>
        <text x="298" y="148" fontSize="20" fontWeight="700" letterSpacing="3" fontFamily={guj} fill="#59636e" stroke="#fff" strokeWidth="2" strokeOpacity="0.85" paintOrder="stroke">અમદાવાદ</text>
        <g transform="translate(344 100)">
          <path d="M0 27C-3 17-13 11-13 0a13 13 0 0 1 26 0C13 11 3 17 0 27z" fill="#ee2d35" />
          <circle r="4.500" fill="#8f0f1a" />
        </g>
      </svg>
      <div className="absolute left-[638px] top-[11px] flex h-10 w-10 items-center justify-center bg-white">
        <svg viewBox="0 0 18 18" className="h-[18px] w-[18px]" fill="none" stroke="#666" strokeWidth="2">
          <path d="M1 6V1h5M12 1h5v5M17 12v5h-5M6 17H1v-5" />
        </svg>
      </div>
    </div>
  )
}

function Card({ children, className = '' }: { children: ReactNode; className?: string }) {
  return <section className={`rounded-[3px] border border-[#e4e6eb] bg-white ${className}`}>{children}</section>
}

function CardHead({ children }: { children: ReactNode }) {
  return <h2 className="flex h-[52px] items-center border-b border-[#e4e6eb] px-4 pb-[2px] text-[16px] font-medium text-[#23272b]">{children}</h2>
}

function Form() {
  return (
    <main className='flex min-w-0 flex-1 flex-col gap-[17px] overflow-hidden bg-[#f8f9fb] px-[131px] font-["Roboto",sans-serif]'>
      <Card className="-mt-[20px] h-[130px] shrink-0 rounded-t-none px-4">
        <div className="h-[24px] w-[521px] rounded-[4px] border border-[#dcdee3]" />
        <div className="mt-[15px]">
          <Label>Status</Label>
        </div>
        <div className="-mt-px flex items-center text-[15px] text-[#2f3337]">
          <span className="flex h-4 w-4 items-center justify-center rounded-full bg-[#0b6cbd]">
            <span className="h-[6px] w-[6px] rounded-full bg-white" />
          </span>
          <span className="ml-2 -translate-y-px">Active</span>
          <span className="ml-5 h-4 w-4 rounded-full border border-[#d5d7db]" />
          <span className="ml-2 -translate-y-px">Inactive</span>
        </div>
      </Card>

      <Card className="shrink-0">
        <CardHead>Business Details</CardHead>
        <div className="px-4 pb-8 pt-[15px]">
          <div className="grid grid-cols-2 gap-x-4 gap-y-[15px]">
            <div>
              <Label>Business Name</Label>
              <div className={`${inputBox} flex items-center px-3`}>
                <Placeholder>Enter business name</Placeholder>
              </div>
            </div>
            <div>
              <Label>Business Website URL</Label>
              <div className={`${inputBox} flex items-center !pb-0`}>
                <span className="flex h-full w-[73px] items-center justify-center rounded-l-[4px] border-r border-[#dcdee3] bg-[#fbfbfc] pb-[2px] text-[15px] text-[#5c6268]">https://</span>
                <Placeholder className="ml-3 pb-[2px]">Enter business website url</Placeholder>
              </div>
            </div>
            <div>
              <Label>Select Plan*</Label>
              <div className={`${inputBox} flex items-center justify-between pl-3 pr-[14px] text-[15px] text-[#3a3f44]`}>
                Choose Plan
                <ChevronDown className="h-[14px] w-[14px] text-[#9aa0a6]" />
              </div>
            </div>
            <div>
              <Label>Rate Per Event</Label>
              <div className={`${inputBox} flex items-center overflow-hidden !pb-0`}>
                <DollarSign className="ml-[11px] h-4 w-4 text-[#6b7076]" />
                <Placeholder className="ml-[13px] pb-[2px]">Enter rate</Placeholder>
                <span className="ml-auto flex h-full w-[15px] flex-col items-center justify-center gap-[8px] bg-[#f0f0f0]">
                  <span className="h-0 w-0 border-x-[4px] border-b-[4px] border-x-transparent border-b-[#444]" />
                  <span className="h-0 w-0 border-x-[4px] border-t-[4px] border-x-transparent border-t-[#444]" />
                </span>
              </div>
            </div>
          </div>
          <div className="mt-[15px]">
            <Label>Business Description</Label>
            <EditorBar />
            <div className="flex h-[48px] items-center border border-t-0 border-[#c4c4c4] px-[9px]">
              <span className="text-[15px] text-[#6f757b]">Enter business description</span>
            </div>
          </div>
        </div>
      </Card>

      <div className="flex shrink-0 items-start gap-[16px]">
        <Card className="w-[722px] shrink-0 px-4 pb-4 pt-[16px]">
          <h2 className="h-[21px] text-[16px] font-medium leading-[21px] text-[#23272b]">Business Location</h2>
          <div className="mt-[10px] flex h-[31px] items-center border border-[#e0e0e0] px-[10px]">
            <Placeholder>Search your location</Placeholder>
          </div>
          <MapView />
        </Card>
        <Card className="min-w-0 flex-1">
          <CardHead>Business Address</CardHead>
          <div className="px-4 pb-8 pt-[15px]">
            <Label>Address*</Label>
            <div className="relative h-[56px] w-full rounded-[4px] border border-[#dcdee3]">
              <svg viewBox="0 0 10 10" className="absolute bottom-0 right-0 h-[10px] w-[10px]" stroke="#888">
                <path d="M2 9l7-7M6 9l3-3" />
              </svg>
            </div>
            <div className="mt-[15px]">
              <Label>City*</Label>
              <div className={inputBox} />
            </div>
          </div>
        </Card>
      </div>
    </main>
  )
}

function Scrollbar() {
  return (
    <div className="flex w-[14px] shrink-0 flex-col items-center bg-[#f1f1f1] pl-px">
      <span className="mt-[6px] h-0 w-0 border-x-[4px] border-b-[5px] border-x-transparent border-b-[#505050]" />
      <span className="mt-[227px] h-[360px] w-[11px] bg-[#c1c1c1]" />
      <span className="mt-auto mb-[5px] h-0 w-0 border-x-[4px] border-t-[5px] border-x-transparent border-t-[#505050]" />
    </div>
  )
}

export default function App() {
  return (
    <div className="flex h-[900px] w-[1440px] flex-col overflow-hidden bg-white">
      <TopBar />
      <div className="relative flex min-h-0 flex-1">
        <div className="absolute inset-y-0 left-0 z-10 flex">
          <Dock />
        </div>
        <div className="flex min-w-0 flex-1 flex-col">
          <TabStrip />
          <Toolbar />
          <BookmarksBar />
          <div className="flex min-h-0 flex-1 pl-[72px]">
            <Form />
            <Scrollbar />
          </div>
        </div>
      </div>
    </div>
  )
}
